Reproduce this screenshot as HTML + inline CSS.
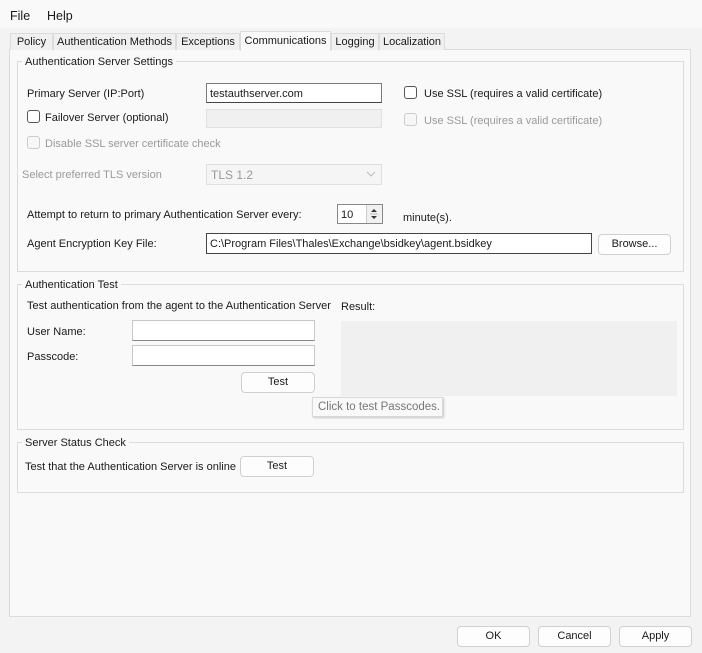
<!DOCTYPE html>
<html><head><meta charset="utf-8"><style>
*{box-sizing:border-box;margin:0;padding:0}
body{width:702px;height:653px;background:#f3f3f3;font-family:"Liberation Sans",sans-serif;font-size:11px;color:#1a1a1a;position:relative;overflow:hidden}
.a{position:absolute;white-space:nowrap}
.t{position:absolute;white-space:nowrap;line-height:14px;margin-top:1px}
.in{position:absolute;background:#fff;border:1px solid #7a7a7a;border-bottom-color:#444;padding:3px 3px 1px;line-height:14px;white-space:nowrap;overflow:hidden}
.dis{position:absolute;background:#f0f0f0;border:1px solid #e0e0e0}
.btn{position:absolute;background:#fdfdfd;border:1px solid #d0d0d0;border-radius:4px;text-align:center;line-height:19px;white-space:nowrap}
.cb{position:absolute;width:13px;height:13px;border:1px solid #555;border-radius:3px;background:#fff}
.cbd{border-color:#ccc;background:#f7f7f7}
.grp{position:absolute;border:1px solid #dcdcdc}
.gl{position:absolute;background:#f9f9f9;padding:0 3px;line-height:14px;white-space:nowrap;margin-top:1px}
.g{color:#9a9a9a}
.tab{position:absolute;top:33px;height:17px;border:1px solid #dcdcdc;border-bottom:none;background:#f0f0f0;line-height:17px;text-align:center;white-space:nowrap;overflow:hidden}
</style></head><body>
<div class="a" style="left:0;top:0;width:702px;height:28px;background:#f9f9f9"></div>
<div class="t" style="left:10px;top:8px;font-size:12.5px">File</div>
<div class="t" style="left:47px;top:8px;font-size:12.5px">Help</div>

<div class="a" style="left:9px;top:49px;width:682px;height:568px;background:#f9f9f9;border:1px solid #dcdcdc"></div>
<div class="tab" style="left:10px;width:43px">Policy</div>
<div class="tab" style="left:53px;width:123px">Authentication Methods</div>
<div class="tab" style="left:176px;width:64px">Exceptions</div>
<div class="tab" style="left:240px;top:31px;height:20px;width:91px;background:#f9f9f9;line-height:19px">Communications</div>
<div class="tab" style="left:331px;width:48px">Logging</div>
<div class="tab" style="left:379px;width:66px">Localization</div>

<div class="grp" style="left:17px;top:61px;width:667px;height:211px"></div>
<div class="gl" style="left:22px;top:54px">Authentication Server Settings</div>
<div class="t" style="left:27px;top:86px">Primary Server (IP:Port)</div>
<div class="in" style="left:206px;top:83px;width:176px;height:20px">testauthserver.com</div>
<div class="cb" style="left:404px;top:86px"></div>
<div class="t" style="left:424px;top:86px">Use SSL (requires a valid certificate)</div>
<div class="cb" style="left:27px;top:110px"></div>
<div class="t" style="left:45px;top:110px">Failover Server (optional)</div>
<div class="dis" style="left:206px;top:109px;width:176px;height:19px"></div>
<div class="cb cbd" style="left:404px;top:113px"></div>
<div class="t g" style="left:424px;top:113px">Use SSL (requires a valid certificate)</div>
<div class="cb cbd" style="left:27px;top:136px"></div>
<div class="t g" style="left:45px;top:136px">Disable SSL server certificate check</div>
<div class="t g" style="left:22px;top:167px">Select preferred TLS version</div>
<div class="dis" style="left:206px;top:164px;width:176px;height:21px;background:#f5f5f5"></div>
<div class="t g" style="left:211px;top:167px;font-size:12px">TLS 1.2</div>
<svg class="a" style="left:366px;top:171px" width="10" height="6"><path d="M1 1L5 5L9 1" fill="none" stroke="#bbb"/></svg>
<div class="t" style="left:27px;top:207px">Attempt to return to primary Authentication Server every:</div>
<div class="in" style="left:337px;top:204px;width:46px;height:20px;border-color:#888">10</div>
<div class="a" style="left:366px;top:205px;width:16px;height:18px;background:#f0f0f0;border-left:1px solid #ccc"></div>
<svg class="a" style="left:369px;top:207px" width="10" height="14"><path d="M2 5L5 2L8 5Z M2 9L5 12L8 9Z" fill="#333"/><path d="M1 7H9" stroke="#bbb"/></svg>
<div class="t" style="left:403px;top:210px">minute(s).</div>
<div class="t" style="left:27px;top:236px">Agent Encryption Key File:</div>
<div class="in" style="left:206px;top:233px;width:386px;height:21px;border-color:#444">C:\Program Files\Thales\Exchange\bsidkey\agent.bsidkey</div>
<div class="btn" style="left:598px;top:234px;width:73px;height:21px">Browse...</div>

<div class="grp" style="left:17px;top:284px;width:667px;height:146px"></div>
<div class="gl" style="left:22px;top:277px">Authentication Test</div>
<div class="t" style="left:27px;top:298px">Test authentication from the agent to the Authentication Server</div>
<div class="t" style="left:341px;top:299px">Result:</div>
<div class="t" style="left:27px;top:324px">User Name:</div>
<div class="in" style="left:132px;top:320px;width:183px;height:21px;border-color:#c8c8c8;border-bottom-color:#888"></div>
<div class="t" style="left:27px;top:349px">Passcode:</div>
<div class="in" style="left:132px;top:345px;width:183px;height:21px;border-color:#c8c8c8;border-bottom-color:#888"></div>
<div class="btn" style="left:241px;top:372px;width:74px;height:21px">Test</div>
<div class="a" style="left:341px;top:321px;width:336px;height:75px;background:#f0f0f0"></div>
<div class="a" style="left:312px;top:397px;width:131px;height:20px;background:#f9f9f9;border:1px solid #d8d8d8;box-shadow:1px 1px 2px rgba(0,0,0,.2);color:#777;padding-left:5px;line-height:18px;font-size:11.5px">Click to test Passcodes.</div>

<div class="grp" style="left:17px;top:442px;width:667px;height:51px"></div>
<div class="gl" style="left:22px;top:435px">Server Status Check</div>
<div class="t" style="left:25px;top:459px">Test that the Authentication Server is online</div>
<div class="btn" style="left:240px;top:456px;width:74px;height:21px">Test</div>

<div class="btn" style="left:457px;top:626px;width:73px;height:21px">OK</div>
<div class="btn" style="left:538px;top:626px;width:73px;height:21px">Cancel</div>
<div class="btn" style="left:619px;top:626px;width:73px;height:21px">Apply</div>
</body></html>
